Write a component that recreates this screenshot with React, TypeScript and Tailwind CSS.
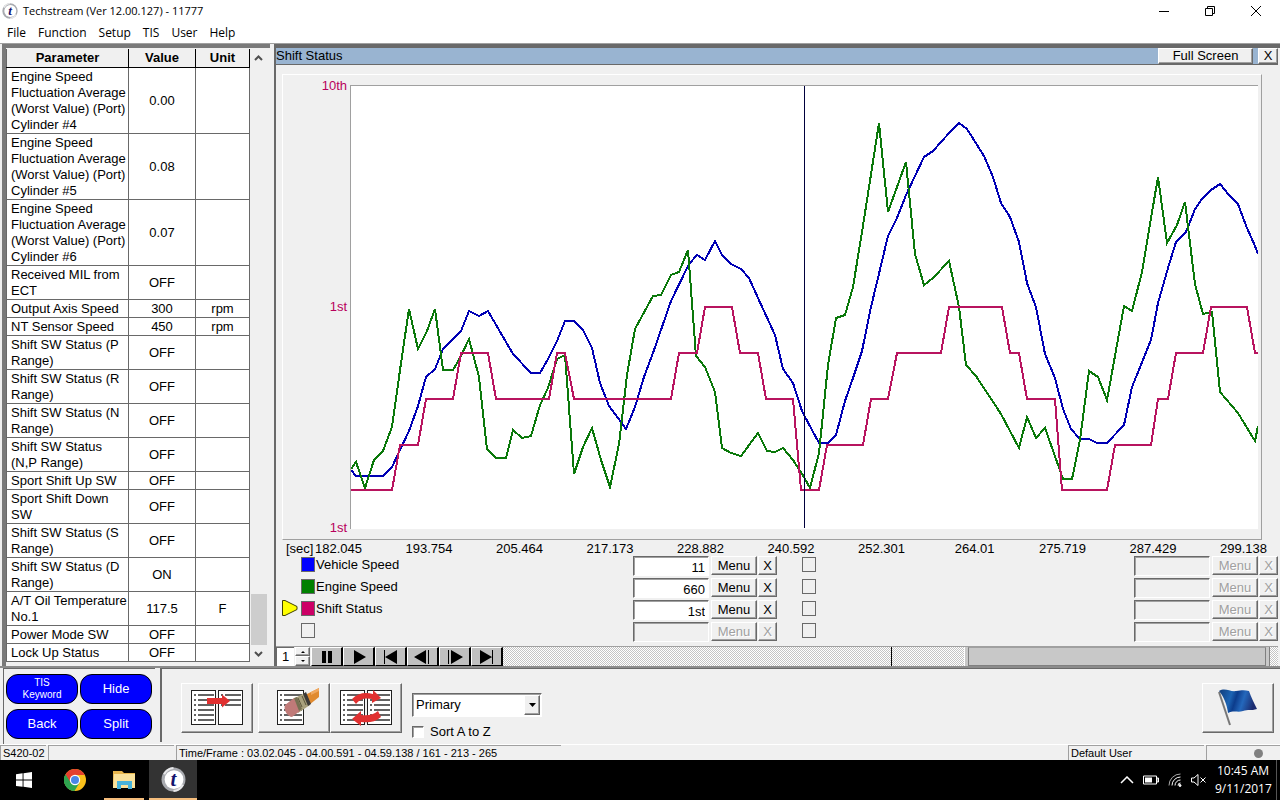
import { useState } from 'react';
import type { ReactNode } from 'react';

interface Parameter {
    name: string;
    value: string;
    unit?: string;
}

interface Slot {
    id: string;
    label?: string;
    value?: string;
    swatch?: string;
}

const PARAMETERS: Parameter[] = [
    { name: 'Engine Speed\nFluctuation Average\n(Worst Value) (Port)\nCylinder #4', value: '0.00' },
    { name: 'Engine Speed\nFluctuation Average\n(Worst Value) (Port)\nCylinder #5', value: '0.08' },
    { name: 'Engine Speed\nFluctuation Average\n(Worst Value) (Port)\nCylinder #6', value: '0.07' },
    { name: 'Received MIL from\nECT', value: 'OFF' },
    { name: 'Output Axis Speed', value: '300', unit: 'rpm' },
    { name: 'NT Sensor Speed', value: '450', unit: 'rpm' },
    { name: 'Shift SW Status (P\nRange)', value: 'OFF' },
    { name: 'Shift SW Status (R\nRange)', value: 'OFF' },
    { name: 'Shift SW Status (N\nRange)', value: 'OFF' },
    { name: 'Shift SW Status\n(N,P Range)', value: 'OFF' },
    { name: 'Sport Shift Up SW', value: 'OFF' },
    { name: 'Sport Shift Down\nSW', value: 'OFF' },
    { name: 'Shift SW Status (S\nRange)', value: 'OFF' },
    { name: 'Shift SW Status (D\nRange)', value: 'ON' },
    { name: 'A/T Oil Temperature\nNo.1', value: '117.5', unit: 'F' },
    { name: 'Power Mode SW', value: 'OFF' },
    { name: 'Lock Up Status', value: 'OFF' },
];

const MENUS = ['File', 'Function', 'Setup', 'TIS', 'User', 'Help'];

const TIMES = [
    '182.045', '193.754', '205.464', '217.173', '228.882', '240.592',
    '252.301', '264.01', '275.719', '287.429', '299.138',
];

const LEFT_SLOTS: Slot[] = [
    { id: 'a1', label: 'Vehicle Speed', value: '11', swatch: 'bg-[#0000ff]' },
    { id: 'a2', label: 'Engine Speed', value: '660', swatch: 'bg-[#008000]' },
    { id: 'a3', label: 'Shift Status', value: '1st', swatch: 'bg-[#cc0066]' },
    { id: 'a4' },
];

const RIGHT_SLOTS: Slot[] = [{ id: 'b1' }, { id: 'b2' }, { id: 'b3' }, { id: 'b4' }];

const VEHICLE_SPEED =
    '351,470 356,476 383,476 392,467 400,450 409,431 418,406 426,377 435,369 443,349 461,331 469,311 479,316 488,311 ' +
    '513,354 531,373 540,373 548,359 557,341 565,321 574,321 583,330 592,348 600,383 609,406 618,418 626,429 635,407 ' +
    '644,377 653,353 671,301 689,264 697,255 705,260 715,241 722,255 731,264 741,269 749,278 758,298 775,335 783,369 ' +
    '793,383 802,411 804,415 819,443 828,443 836,435 845,401 853,378 862,351 871,307 888,236 897,218 906,195 915,176 ' +
    '924,157 933,151 950,132 959,123 967,129 984,156 993,177 1001,203 1010,217 1019,242 1027,283 1036,307 1045,354 ' +
    '1055,378 1063,409 1071,429 1080,439 1089,439 1097,443 1107,443 1124,425 1132,387 1151,340 1158,303 1168,268 ' +
    '1176,242 1186,232 1195,209 1202,199 1211,190 1220,184 1229,195 1238,204 1247,228 1255,246 1258,254';

const ENGINE_SPEED =
    '351,469 356,462 365,488 374,460 383,451 392,427 400,370 409,309 418,349 427,331 435,309 443,370 453,370 461,356 ' +
    '469,339 479,377 487,449 496,458 506,458 513,430 522,438 531,436 540,405 548,388 557,359 565,355 574,474 583,447 ' +
    '592,428 601,460 610,487 619,444 627,375 635,329 653,296 661,295 671,275 679,272 688,250 696,356 705,367 715,392 ' +
    '722,448 731,453 741,456 758,433 767,451 775,452 783,448 793,460 804,477 810,488 819,453 828,365 836,318 845,315 ' +
    '853,287 862,232 879,123 888,212 906,162 915,254 924,285 933,278 949,261 959,307 966,365 976,376 1001,414 ' +
    '1019,448 1027,417 1036,438 1045,428 1063,479 1072,479 1080,440 1089,371 1098,377 1107,400 1124,306 1132,311 ' +
    '1142,272 1149,230 1158,177 1167,243 1177,225 1185,202 1195,284 1203,314 1212,312 1220,392 1238,413 1255,441 1258,426';

const SHIFT_STATUS =
    '351,490 392,490 400,445 418,445 426,399 453,399 461,353 488,353 496,399 549,399 557,353 565,353 574,399 671,399 ' +
    '679,353 697,353 705,307 732,307 740,353 758,353 766,399 793,399 801,490 819,490 827,445 863,445 871,399 888,399 ' +
    '897,353 941,353 949,307 1002,307 1010,353 1019,353 1027,399 1055,399 1062,490 1107,490 1115,445 1151,445 ' +
    '1158,399 1168,399 1176,353 1203,353 1211,307 1247,307 1255,353 1258,353';

const raised = 'border border-t-white border-l-white border-r-[#696969] border-b-[#696969] shadow-[inset_-1px_-1px_0_#a0a0a0]';
const sunken = 'border border-t-[#696969] border-l-[#696969] border-r-white border-b-white shadow-[inset_1px_1px_0_#a0a0a0]';

function AppLogo({ size }: { size: number }) {
    return (
        <svg width={size} height={size} viewBox="0 0 24 24" aria-hidden="true" className="overflow-visible">
            <circle cx="12" cy="12" r="11.5" fill="#a9abb0" />
            <path d="M3 7a11 11 0 0 1 9-6M21 17a11 11 0 0 1-9 6" stroke="#e8e8ea" strokeWidth="2" fill="none" />
            <circle cx="12.5" cy="12" r="9" fill="#fff" />
            <text
                x="12"
                y="18"
                textAnchor="middle"
                fill="#14146e"
                className="font-['Liberation_Serif',serif] text-[20px] font-bold italic"
            >
                t
            </text>
        </svg>
    );
}

function TitleBar() {
    return (
        <header className="bg-white font-['Open_Sans','Noto_Sans',sans-serif] text-xs text-black">
            <div className="flex h-[22px] items-center pl-[2px]">
                <AppLogo size={16} />
                <h1 className="ml-[5px] flex-1 text-[11px]">Techstream (Ver 12.00.127) - 11777</h1>
                <button aria-label="Minimize" className="flex w-[46px] justify-center">
                    <svg width="12" height="12" stroke="#000" fill="none"><path d="M1 6.5h10" /></svg>
                </button>
                <button aria-label="Restore" className="flex w-[45px] justify-center">
                    <svg width="12" height="12" stroke="#000" fill="none"><path d="M1.5 3.5h7v7h-7zM3.5 3.5v-2h7v7h-2" /></svg>
                </button>
                <button aria-label="Close" className="flex w-[48px] justify-center">
                    <svg width="12" height="12" stroke="#000" fill="none"><path d="m1 1 10 10M11 1 1 11" /></svg>
                </button>
            </div>
            <nav className="flex h-[21px] items-center gap-3 pl-[7px]">
                {MENUS.map((menu) => (
                    <button key={menu}>{menu}</button>
                ))}
            </nav>
        </header>
    );
}

function ParameterTable() {
    return (
        <section className="flex w-[268px] shrink-0 border-t-4 border-l-4 border-[#7a7a7a] pt-px pb-[4px]">
            <table className="w-[244px] table-fixed border-collapse self-start bg-white text-[13px] leading-4 text-black">
                <thead>
                    <tr className="h-[18px] bg-[#f0f0f0]">
                        <th className="w-[122px] border border-t-0 border-black border-l-[#696969]">Parameter</th>
                        <th className="w-[67px] border border-t-0 border-black">Value</th>
                        <th className="border border-t-0 border-black">Unit</th>
                    </tr>
                </thead>
                <tbody>
                    {PARAMETERS.map((p) => (
                        <tr key={p.name}>
                            <td className="border border-[#696969] pt-px pl-1 whitespace-pre">{p.name}</td>
                            <td className="border border-[#696969] pt-px text-center">{p.value}</td>
                            <td className="border border-[#696969] pt-px text-center">{p.unit}</td>
                        </tr>
                    ))}
                </tbody>
            </table>
            <div className="flex w-[17px] flex-col items-center bg-[#f0f0f0]">
                <button aria-label="Scroll up" className="flex h-[17px] w-full items-center justify-center">
                    <svg width="9" height="6" stroke="#505050" strokeWidth="2" fill="none"><path d="m1 5 3.500-3.500L8 5" /></svg>
                </button>
                <div className="flex w-full flex-1 flex-col justify-end">
                    <div className="ml-px h-[51px] bg-[#cdcdcd]" />
                </div>
                <button aria-label="Scroll down" className="flex h-[17px] w-full items-center justify-center">
                    <svg width="9" height="6" stroke="#505050" strokeWidth="2" fill="none"><path d="m1 1 3.500 3.500L8 1" /></svg>
                </button>
            </div>
        </section>
    );
}

function Chart() {
    return (
        <div className="mr-[16px] ml-[6px] flex flex-1 border border-t-white border-l-white border-r-[#a0a0a0] border-b-[#a0a0a0] pt-[3px] pr-[3px] pb-[3px]">
            <div className="flex w-[67px] flex-col justify-between pr-[3px] text-right text-[#b8005c]">
                <span>10th</span>
                <span>1st</span>
                <span>1st</span>
            </div>
            <div className="my-[7px] flex-1 border-t border-l border-[#a0a0a0] bg-white">
                <svg
                    className="block h-[442px] w-full"
                    viewBox="351 86 907 442"
                    preserveAspectRatio="none"
                    fill="none"
                    strokeWidth="2"
                    shapeRendering="crispEdges"
                    role="img"
                    aria-label="Vehicle speed, engine speed and shift status over time"
                >
                    <polyline points={VEHICLE_SPEED} stroke="#0000b4" />
                    <polyline points={ENGINE_SPEED} stroke="#0a780a" />
                    <polyline points={SHIFT_STATUS} stroke="#b8145f" />
                    <path d="M804.5 86v442" stroke="#00003c" strokeWidth="1" />
                </svg>
            </div>
        </div>
    );
}

function SlotRow({ slot }: { slot: Slot }) {
    const enabled = Boolean(slot.label);
    const button = `h-[19px] bg-[#f0f0f0] leading-4 ${raised} ${enabled ? 'text-black' : 'text-[#a0a0a0] [text-shadow:1px_1px_0_#fff]'}`;

    return (
        <div className="flex h-[22px] items-start">
            <input
                id={slot.id}
                type="checkbox"
                aria-label={slot.label ?? 'Empty slot'}
                className={`mt-px h-[15px] w-[14px] shrink-0 appearance-none border border-[#696969] ${slot.swatch ?? ''}`}
            />
            <label htmlFor={slot.id} className="ml-px flex-1 leading-[18px]">{slot.label}</label>
            <input
                readOnly
                aria-label={`${slot.label ?? 'Empty slot'} value`}
                value={slot.value ?? ''}
                className={`h-[20px] w-[76px] pt-[2px] pr-[3px] text-right ${sunken} ${enabled ? 'bg-white' : 'bg-[#f0f0f0]'}`}
            />
            <button disabled={!enabled} className={`ml-[2px] w-[46px] ${button}`}>Menu</button>
            <button disabled={!enabled} className={`ml-px w-[19px] ${button}`}>X</button>
        </div>
    );
}

const PLAYBACK: { label: string; icon: ReactNode }[] = [
    { label: 'Pause', icon: <path d="M5 2h4v12H5zM11 2h4v12h-4z" /> },
    { label: 'Play', icon: <path d="M5 1v14l12-7z" /> },
    { label: 'First', icon: <path d="M3 1h1v14H3zM16 1v14L4 8z" /> },
    { label: 'Step back', icon: <path d="M13 1v14L1 8zM15 1h1v14h-1z" /> },
    { label: 'Step forward', icon: <path d="M3 1h1v14H3zM6 1v14l12-7z" /> },
    { label: 'Last', icon: <path d="M3 1v14l12-7zM15 1h1v14h-1z" /> },
];

function PlaybackBar() {
    return (
        <div className="mt-[2px] flex h-[20px] border-t border-[#a0a0a0]">
            <input
                aria-label="Playback speed"
                readOnly
                value="1"
                className="w-[18px] border-t border-l border-[#696969] bg-white pl-[5px]"
            />
            <div className="mx-px flex w-[15px] flex-col">
                <button aria-label="Faster" className={`flex h-[9px] items-center justify-center ${raised}`}>
                    <svg width="4" height="2"><path d="M0 2 2 0l2 2z" /></svg>
                </button>
                <button aria-label="Slower" className={`flex h-[10px] items-center justify-center ${raised}`}>
                    <svg width="4" height="2"><path d="m0 0 2 2 2-2z" /></svg>
                </button>
            </div>
            {PLAYBACK.map((item) => (
                <button
                    key={item.label}
                    aria-label={item.label}
                    className="flex w-[32px] items-center justify-center border-t border-r-2 border-b border-l border-t-white border-r-black border-b-black border-l-white bg-[#c0c0c0]"
                >
                    <svg width="20" height="16">{item.icon}</svg>
                </button>
            ))}
            <div
                role="scrollbar"
                aria-label="Frame position"
                aria-controls="chart"
                aria-valuenow={213}
                className="relative flex-1 bg-[repeating-conic-gradient(#ffffff_0_25%,#c4c4c4_0_50%)] bg-size-[2px_2px]"
            >
                <div className="absolute inset-y-0 left-1/2 w-px bg-black" />
                <div className="absolute inset-y-0 left-[59.5%] flex w-[39.5%] border-r border-l border-r-[#808080] border-l-white bg-[#c8c8c8] px-[3px]">
                    <div className="flex-1 border border-t-[#a0a0a0] border-r-[#808080] border-b-[#808080] border-l-[#808080]" />
                </div>
            </div>
        </div>
    );
}

function GraphPanel() {
    return (
        <section
            id="chart"
            className="ml-[4px] flex min-w-0 flex-1 flex-col border-t-4 border-l-2 border-[#696969] pr-[2px] text-[13px] leading-4 text-black"
        >
            <div className="flex h-[17px] items-center border-b border-[#696969] bg-[#99b4d1]">
                <h2 className="flex-1">Shift Status</h2>
                <button className={`h-[16px] w-[95px] bg-[#f0f0f0] leading-[14px] ${raised}`}>Full Screen</button>
                <button className={`ml-[5px] h-[16px] w-[20px] bg-[#f0f0f0] leading-[14px] ${raised}`}>X</button>
            </div>
            <div className="h-[9px]" />
            <Chart />
            <div className="flex h-[16px] justify-between pt-px pr-[12px] pl-[10px]">
                <span className="w-[29px]">[sec]</span>
                <div className="flex flex-1 justify-between">
                    {TIMES.map((time) => (
                        <span key={time} className="w-[46px] text-right">{time}</span>
                    ))}
                </div>
            </div>
            <div className="flex gap-[25px]">
                <div className="w-[19px] self-end pb-[28px] pl-[6px]">
                    <svg width="16" height="16" viewBox="0 0 16 16">
                        <path d="M.5.5v15L3 15.500l12-6v-3L3 .5z" fill="#ffff00" stroke="#404000" />
                    </svg>
                </div>
                <div className="-ml-[19px] flex-1">
                    {LEFT_SLOTS.map((slot) => <SlotRow key={slot.id} slot={slot} />)}
                </div>
                <div className="flex-1">
                    {RIGHT_SLOTS.map((slot) => <SlotRow key={slot.id} slot={slot} />)}
                </div>
            </div>
            <PlaybackBar />
        </section>
    );
}

function ListPage({ x, width, rows }: { x: number; width: number; rows: number }) {
    return (
        <g>
            <rect x={x + 0.5} y="3.5" width={width} height="34" fill="#fff" stroke="#202020" />
            {Array.from({ length: rows }, (_, i) => (
                <path
                    key={i}
                    d={`M${x + 3} ${8 + i * 5}h2m2 0h${width - 8}`}
                    stroke="#303030"
                    strokeWidth="1.5"
                />
            ))}
        </g>
    );
}

function MoveIcon() {
    return (
        <svg width="54" height="42" viewBox="0 0 54 42">
            <ListPage x={1} width={24} rows={6} />
            <ListPage x={28} width={24} rows={3} />
            <path d="M17 11h15V7.500l8 6.500-8 6.500V17H17z" fill="#e03030" />
        </svg>
    );
}

function EraseIcon() {
    return (
        <svg width="54" height="42" viewBox="0 0 54 42">
            <ListPage x={10} width={26} rows={6} />
            <path d="m38 8 14-7v9L42 18z" fill="#e08a30" />
            <path d="m44 5 8-4v3l-8 4z" fill="#f0a860" />
            <path d="m26 12 12-6 5 12-12 8z" fill="#a8a07c" />
            <path d="m31 11 4 9M35 9l4 9" stroke="#5c563c" />
            <path d="m36 7 3-2 5 12-3 2z" fill="#3c3a38" />
            <path d="m18 18 9-7 6 13-8 6c-4 0-9-7-7-12z" fill="#c07a78" />
            <path d="m27 11 3-1 5 12-3 2z" fill="#777052" />
        </svg>
    );
}

function SwapIcon() {
    return (
        <svg width="54" height="42" viewBox="0 0 54 42">
            <ListPage x={1} width={24} rows={6} />
            <ListPage x={28} width={24} rows={6} />
            <path d="M13 12C19 6 26 5 34 7V3l8 8-9 5v-4c-6-1-11-1-16 5z" fill="#e03030" />
            <path d="M42 30c-6 5-12 6-20 5v4l-9-7 9-8v4c7 1 12 0 17-4z" fill="#e03030" />
        </svg>
    );
}

function FlagIcon() {
    return (
        <svg width="42" height="40" viewBox="0 0 42 40">
            <defs>
                <linearGradient id="flag" x1="0" x2="1" y1="0" y2="0.2">
                    <stop offset="0" stopColor="#123c78" />
                    <stop offset="0.35" stopColor="#1c64b4" />
                    <stop offset="0.5" stopColor="#0c3c8c" />
                    <stop offset="0.7" stopColor="#2468bc" />
                    <stop offset="1" stopColor="#1c2c70" />
                </linearGradient>
            </defs>
            <path d="m2 4 11 33" stroke="#777" strokeWidth="2" />
            <path d="M2 3c6-4 11 1 17 0s9-1 13 0c2 6 5 12 8 18-6 2-9 0-14 2s-9-1-15 2C10 17 7 9 2 3z" fill="url(#flag)" />
        </svg>
    );
}

const pill = 'h-[30px] rounded-xl border border-black bg-[#0000ff] text-white';
const toolButton = `flex h-[50px] w-[72px] items-center justify-center bg-[#f0f0f0] ${raised}`;

function BottomBar() {
    const [group, setGroup] = useState('Primary');
    const [sorted, setSorted] = useState(false);

    return (
        <section className="flex h-[76px] gap-[5px] bg-[#f0f0f0] pl-[3px] text-[13px] text-black">
            <div className="grid w-[152px] grid-cols-2 content-start gap-x-[2px] gap-y-[5px] border-t border-l border-[#696969] pt-[5px] pr-[3px] pl-[2px]">
                <button className={`${pill} text-[10px] leading-[12px]`}>TIS<br />Keyword</button>
                <button className={pill}>Hide</button>
                <button className={pill}>Back</button>
                <button className={pill}>Split</button>
            </div>
            <div className="mb-[2px] flex flex-1 items-start border-t border-l-2 border-[#696969] pt-[14px] pr-[6px] pl-[19px]">
                <button aria-label="Move to list" className={toolButton}><MoveIcon /></button>
                <button aria-label="Clear list" className={`ml-[5px] ${toolButton}`}><EraseIcon /></button>
                <button aria-label="Swap lists" className={toolButton}><SwapIcon /></button>
                <div className="mt-[10px] ml-[10px] flex flex-1 flex-col items-start gap-[7px]">
                    <div className="relative">
                        <select
                            aria-label="Parameter group"
                            value={group}
                            onChange={(e) => setGroup(e.target.value)}
                            className={`block h-[24px] w-[130px] appearance-none bg-white pl-[3px] ${sunken}`}
                        >
                            <option>Primary</option>
                            <option>All Data</option>
                        </select>
                        <span className={`pointer-events-none absolute top-[2px] right-[2px] flex h-[20px] w-[16px] items-center justify-center bg-[#f0f0f0] ${raised}`}>
                            <svg width="7" height="4"><path d="M0 0h7L3.500 4z" /></svg>
                        </span>
                    </div>
                    <label className="flex items-center gap-[6px] leading-[16px]">
                        <input
                            type="checkbox"
                            checked={sorted}
                            onChange={(e) => setSorted(e.target.checked)}
                            className={`h-[12px] w-[12px] appearance-none bg-white checked:bg-[#404040] ${sunken}`}
                        />
                        Sort A to Z
                    </label>
                </div>
                <button aria-label="Set flag" className={toolButton}><FlagIcon /></button>
            </div>
        </section>
    );
}

function StatusBar() {
    const cell = 'h-[15px] border-t border-l border-[#a0a0a0] pl-[2px]';

    return (
        <footer className="flex h-[16px] gap-[2px] border-t border-white bg-[#f0f0f0] text-[11px] leading-[14px] text-black">
            <span className={`w-[46px] ${cell}`}>S420-02</span>
            <span className={`w-[126px] ${cell}`} />
            <span className={`w-[385px] ${cell}`}>Time/Frame : 03.02.045 - 04.00.591 - 04.59.138 / 161 - 213 - 265</span>
            <span className="h-[15px] flex-1" />
            <span className={`w-[136px] ${cell}`}>Default User</span>
            <span className={`flex w-[74px] items-center justify-end pr-[17px] ${cell}`}>
                <span className="h-[9px] w-[9px] rounded-full bg-[#808080]" />
            </span>
        </footer>
    );
}

function Taskbar() {
    return (
        <footer className="flex h-[40px] bg-black font-['Open_Sans','Noto_Sans',sans-serif] text-xs text-white">
            <button aria-label="Start" className="flex w-[48px] items-center justify-center">
                <svg width="16" height="16" fill="#fff"><path d="M0 2.200 6.600 1.300v6.300H0zM7.500 1.200 16 0v7.600H7.500zM0 8.500h6.600v6.300L0 13.900zM7.500 8.500H16V16l-8.500-1.200z" /></svg>
            </button>
            <button aria-label="Chrome" className="flex w-[54px] items-center justify-center">
                <svg width="22" height="22" viewBox="0 0 22 22">
                    <circle cx="11" cy="11" r="11" fill="#fbc11b" />
                    <path d="M11 11 1.470 5.500A11 11 0 0 1 20.530 5.500L20.500 6H11z" fill="#e4402f" />
                    <path d="M1.470 5.500A11 11 0 0 0 10.500 22l5-8.200-4.500-2.800z" fill="#2ea44f" />
                    <path d="M1.470 5.500 6.600 13.500 11 11V6z" fill="#e4402f" />
                    <path d="M1.470 5.500 6.500 14l4.500 2-2 5.800A11 11 0 0 1 1.470 5.500z" fill="#2ea44f" />
                    <circle cx="11" cy="11" r="5.200" fill="#fff" />
                    <circle cx="11" cy="11" r="4" fill="#4a86e8" />
                </svg>
            </button>
            <button aria-label="File Explorer" className="mx-[2px] flex w-[40px] flex-col items-center justify-between pt-[10px]">
                <svg width="22" height="20" viewBox="0 0 22 20">
                    <path d="M0 1h9l2 2h11v15H0z" fill="#e8b64c" />
                    <path d="M1 4h21v14H0z" fill="#fae29b" />
                    <path d="M4 11h15v8h-4v-4H8v4H4z" fill="#48b4dc" />
                </svg>
                <span className="h-[2px] w-full bg-[#f5bd7c]" />
            </button>
            <button aria-label="Techstream" className="ml-[3px] flex w-[48px] flex-col items-center justify-between bg-[#333333] pt-[7px]">
                <AppLogo size={25} />
                <span className="h-[2px] w-full bg-[#f5bd7c]" />
            </button>
            <div className="flex flex-1 items-center justify-end gap-[9px] pr-[3px]">
                <svg width="14" height="8" stroke="#fff" strokeWidth="1.5" fill="none"><path d="m1 7 6-6 6 6" /></svg>
                <svg width="16" height="10"><path d="M.5 1h13v8H.5zM14 3h1.500v4H14z" stroke="#fff" fill="none" /><path d="M2 2.500h7v5H2z" fill="#fff" /></svg>
                <svg width="14" height="14" stroke="#fff" fill="none">
                    <path d="M1 12.500A11.500 11.500 0 0 1 12.500 1" stroke="#aaa" />
                    <path d="M4 12.500A8.500 8.500 0 0 1 12.500 4M7 12.500A5.500 5.500 0 0 1 12.500 7M10 12.500A2.500 2.500 0 0 1 12.500 10" />
                    <circle cx="12" cy="12.500" r="1" fill="#fff" />
                </svg>
                <svg width="15" height="14" stroke="#fff" fill="none"><path d="M.5 5v4h2.500l4 3.500v-11L3 5zM9.500 4.500l5 5M14.500 4.500l-5 5" /></svg>
                <div className="w-[56px] text-center leading-[18px]">
                    <div>10:45 AM</div>
                    <div>9/11/2017</div>
                </div>
                <div className="-ml-[4px] h-[40px] w-px bg-[#555555]" />
            </div>
        </footer>
    );
}

export default function App() {
    return (
        <div className="flex min-h-screen flex-col overflow-hidden bg-[#f0f0f0] font-['Liberation_Sans',Arial,sans-serif]">
            <TitleBar />
            <main className="flex flex-1 border-t border-b-2 border-t-[#a0a0a0] border-b-[#8c8c8c] pl-[2px]">
                <ParameterTable />
                <GraphPanel />
            </main>
            <BottomBar />
            <StatusBar />
            <Taskbar />
        </div>
    );
}
